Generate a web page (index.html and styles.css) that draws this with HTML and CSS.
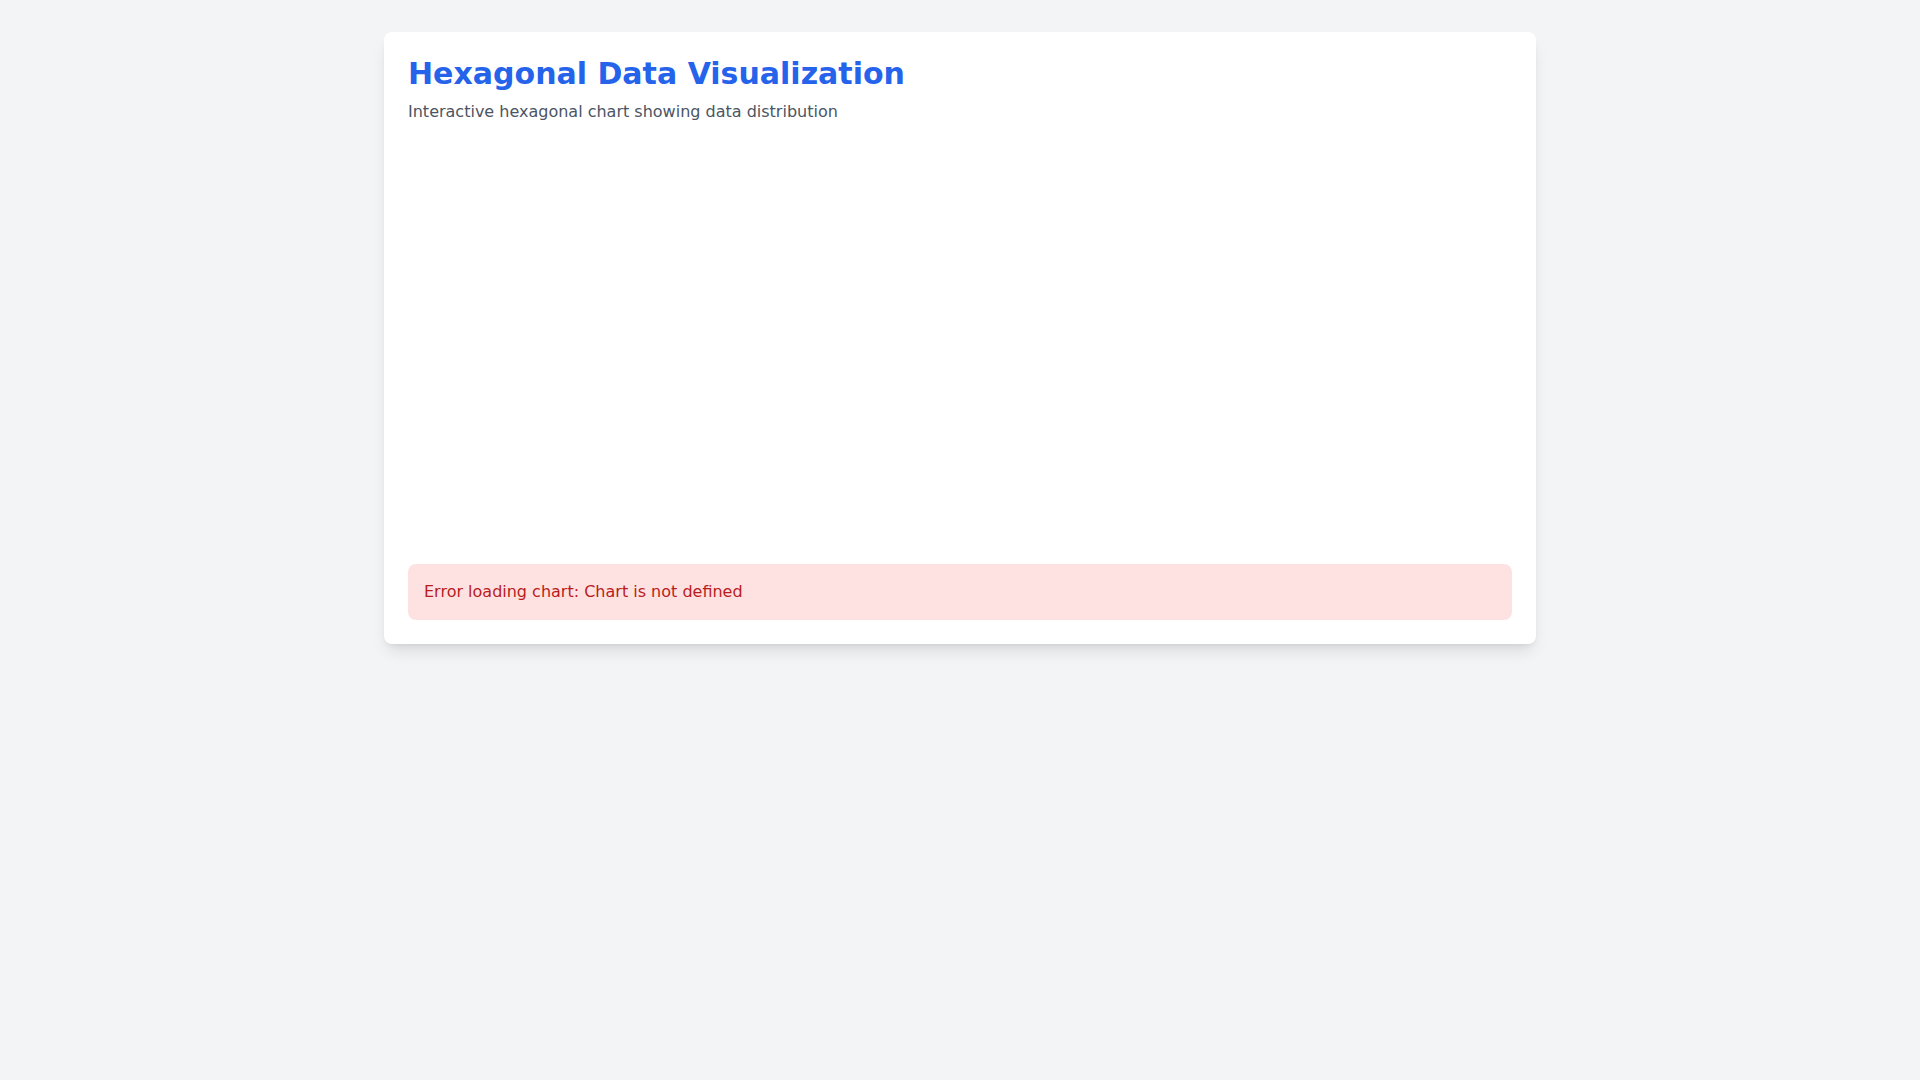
FILE: index.html
```html
<!DOCTYPE html>
<html lang="en">
<head>
<meta charset="utf-8">
<title>Hexagonal Data Visualization</title>
<link rel="stylesheet" href="styles.css">
</head>
<body>
<main class="page">
  <section class="card">
    <header class="header">
      <h1 class="title">Hexagonal Data Visualization</h1>
      <p class="subtitle">Interactive hexagonal chart showing data distribution</p>
    </header>
    <div class="chart"></div>
    <div class="error">Error loading chart: Chart is not defined</div>
  </section>
</main>
</body>
</html>
```
FILE: styles.css
```css
* { box-sizing: border-box; }
html, body { margin: 0; padding: 0; }
body {
  background: #f3f4f6;
  font-family: "DejaVu Sans", sans-serif;
  color: #111827;
}
.page {
  padding: 32px 0;
}
.card {
  width: 1152px;
  margin: 0 auto;
  background: #ffffff;
  border-radius: 8px;
  padding: 24px;
  box-shadow: 0 10px 15px -3px rgba(0,0,0,0.1), 0 4px 6px -4px rgba(0,0,0,0.1);
}
.header { margin-bottom: 24px; }
.title {
  margin: 0;
  font-size: 30px;
  line-height: 36px;
  font-weight: 700;
  color: #2563eb;
}
.subtitle {
  margin: 8px 0 0;
  font-size: 16px;
  line-height: 24px;
  color: #4b5563;
}
.chart { height: 384px; }
.error {
  margin-top: 32px;
  padding: 16px;
  background: #fee2e2;
  color: #b91c1c;
  border-radius: 8px;
  font-size: 16px;
  line-height: 24px;
}
```
